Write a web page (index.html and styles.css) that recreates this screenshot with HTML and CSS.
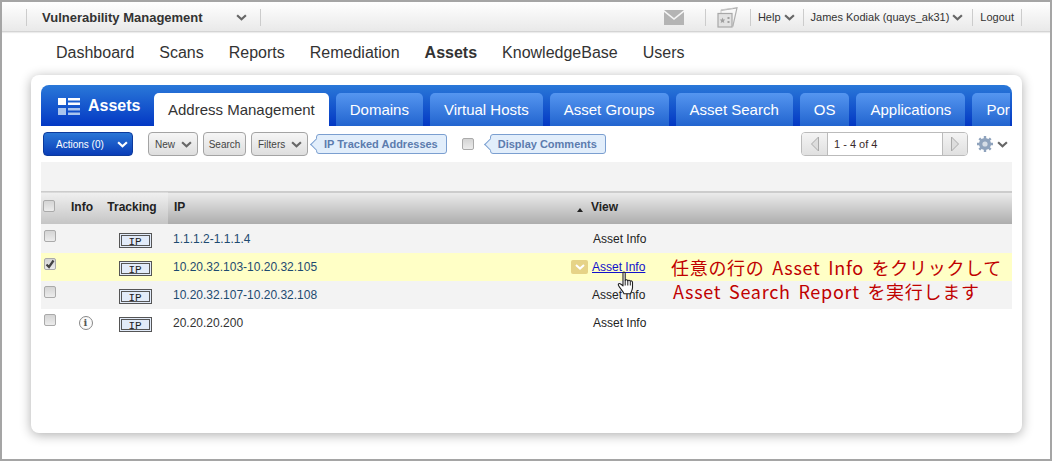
FILE: index.html
```html
<!DOCTYPE html>
<html lang="en">
<head>
  <meta charset="UTF-8" />
  <title>Vulnerability Management - Assets</title>
  <link rel="stylesheet" href="styles.css">
</head>
<body>
<div class="frame">

  <!-- Module switcher and account links -->
  <header class="topbar">
    <div class="module">
      <span>Vulnerability Management</span>
      <svg class="chev chev-lg" viewBox="0 0 10 6"><path d="M1 1l4 3.6L9 1"/></svg>
    </div>
    <div class="account">
      <svg class="mail" viewBox="0 0 20 15"><path d="M0 0h20L10 8z"/><path d="M0 2l10 8 10-8v13H0z"/></svg>
      <span class="acc-item acc-icon">
        <svg class="cards" viewBox="0 0 21 21">
          <path d="M4 3.500L20 .8 15.800 19.500" fill="none" stroke="#b0b0b0" stroke-width="1.200"/>
          <path d="M4 6V2.800l12-1.500" fill="none" stroke="#c8c8c8"/>
          <rect x="1" y="6.500" width="14" height="13.500" fill="#e2e2e2" stroke="#a8a8a8" stroke-width="1.200"/>
          <path d="M5.500 10.500l.8 1.900 2 .2-1.500 1.300.5 2-1.800-1-1.800 1 .5-2-1.500-1.300 2-.2z" fill="#a0a0a0"/>
          <rect x="10.500" y="10" width="2" height="2" fill="#a0a0a0"/>
          <rect x="10.500" y="14" width="2" height="2" fill="#a0a0a0"/>
        </svg>
      </span>
      <span class="acc-item acc-help">Help <svg class="chev chev-lg" viewBox="0 0 10 6"><path d="M1 1l4 3.6L9 1"/></svg></span>
      <span class="acc-item acc-user">James Kodiak (quays_ak31) <svg class="chev chev-lg" viewBox="0 0 10 6"><path d="M1 1l4 3.6L9 1"/></svg></span>
      <span class="acc-item acc-last">Logout</span>
    </div>
  </header>

  <nav class="mainnav">
    <a href="#">Dashboard</a>
    <a href="#">Scans</a>
    <a href="#">Reports</a>
    <a href="#">Remediation</a>
    <a href="#" class="current">Assets</a>
    <a href="#">KnowledgeBase</a>
    <a href="#">Users</a>
  </nav>

  <main class="card">
    <div class="tabbar">
      <div class="brand">
        <svg class="brand-icon" viewBox="0 0 22 17">
          <rect x="0" y="0" width="8" height="7" fill="#fff"/>
          <rect x="10" y="0" width="12" height="2.5" fill="#fff"/>
          <rect x="10" y="4.5" width="12" height="2.5" fill="#fff"/>
          <rect x="0" y="10" width="8" height="7" fill="#a9c4ee"/>
          <rect x="10" y="10" width="12" height="2.5" fill="#a9c4ee"/>
          <rect x="10" y="14.5" width="12" height="2.5" fill="#a9c4ee"/>
        </svg>
        <span>Assets</span>
      </div>
      <div class="tabs">
        <a href="#" class="tab active">Address Management</a>
        <a href="#" class="tab">Domains</a>
        <a href="#" class="tab">Virtual Hosts</a>
        <a href="#" class="tab">Asset Groups</a>
        <a href="#" class="tab">Asset Search</a>
        <a href="#" class="tab">OS</a>
        <a href="#" class="tab">Applications</a>
        <a href="#" class="tab">Ports</a>
      </div>
    </div>

    <div class="toolbar">
      <button class="btn btn-primary">Actions (0) <svg class="chev chev-lg chev-white" viewBox="0 0 10 6"><path d="M1 1l4 3.6L9 1"/></svg></button>
      <button class="btn btn-new">New <svg class="chev chev-lg" viewBox="0 0 10 6"><path d="M1 1l4 3.6L9 1"/></svg></button>
      <button class="btn btn-search">Search</button>
      <button class="btn btn-filters">Filters <svg class="chev chev-lg" viewBox="0 0 10 6"><path d="M1 1l4 3.6L9 1"/></svg></button>
      <span class="callout callout-ip">IP Tracked Addresses</span>
      <span class="check check-comments"></span>
      <span class="callout callout-comments">Display Comments</span>
      <div class="pager">
        <span class="pager-btn"><svg viewBox="0 0 10 16"><path d="M8.5 1v14L1.5 8z"/></svg></span>
        <span class="pager-text">1 - 4 of 4</span>
        <span class="pager-btn pager-next"><svg viewBox="0 0 10 16"><path d="M1.5 1v14l7-7z"/></svg></span>
      </div>
      <svg class="gear" viewBox="0 0 16 16">
        <circle cx="8" cy="8" r="4.6" fill="none" stroke="#8fa3bd" stroke-width="3"/>
        <path d="M8 0v16M0 8h16M2.3 2.3l11.4 11.4M13.7 2.3L2.3 13.7" stroke="#8fa3bd" stroke-width="2.4"/>
        <circle cx="8" cy="8" r="2.6" fill="#d6dde6"/>
      </svg>
      <svg class="chev chev-lg" viewBox="0 0 10 6"><path d="M1 1l4 3.6L9 1"/></svg>
    </div>

    <div class="band"></div>

    <table class="grid">
      <colgroup>
        <col class="col-check"><col class="col-info"><col class="col-track"><col class="col-ip"><col>
      </colgroup>
      <thead>
        <tr>
          <th><span class="check"></span></th>
          <th class="center th-info">Info</th>
          <th class="center th-track">Tracking</th>
          <th class="th-dark">IP <span class="sort"></span></th>
          <th class="th-dark th-view">View</th>
        </tr>
      </thead>
      <tbody>
        <tr class="odd">
          <td><span class="check"></span></td>
          <td></td>
          <td class="center td-badge"><span class="badge">IP</span></td>
          <td class="ip">1.1.1.2-1.1.1.4</td>
          <td class="view">Asset Info</td>
        </tr>
        <tr class="selected">
          <td><span class="check"><svg viewBox="0 0 12 12"><path d="M2.5 6.5l2.5 2.5 4.5-6.5" fill="none" stroke="#444" stroke-width="2.2"/></svg></span></td>
          <td></td>
          <td class="center td-badge"><span class="badge">IP</span></td>
          <td class="ip ip-menu">10.20.32.103-10.20.32.105<span class="rowmenu"><svg class="chev chev-white" viewBox="0 0 10 6"><path d="M1 1l4 3.6L9 1"/></svg></span></td>
          <td class="view view-link"><a href="#">Asset Info</a></td>
        </tr>
        <tr class="odd">
          <td><span class="check"></span></td>
          <td></td>
          <td class="center td-badge"><span class="badge">IP</span></td>
          <td class="ip">10.20.32.107-10.20.32.108</td>
          <td class="view view-link">Asset Info</td>
        </tr>
        <tr>
          <td><span class="check"></span></td>
          <td class="center td-dot"><span class="info-dot">i</span></td>
          <td class="center td-badge"><span class="badge">IP</span></td>
          <td class="ip ip-plain">20.20.20.200</td>
          <td class="view">Asset Info</td>
        </tr>
      </tbody>
    </table>

    <!-- Pointer and note sit on top of the rows -->
    <svg class="hand" viewBox="0 0 18 24">
      <path d="M6 1.500c1-.8 2.200-.2 2.200 1v7c.4-1 2.400-1 2.600.3.500-.9 2.300-.8 2.500.5.600-.7 2.200-.4 2.200 1v5.500c0 2.500-1.500 4-2 6H7c-.6-2-2.300-3.500-4-6-.9-1.300-2.300-3-1.500-4 .7-.8 2-.3 4.500 2V2.500z" fill="#fff" stroke="#222" stroke-width="1.100" stroke-linejoin="round"/>
      <path d="M8.200 9.500v5M10.800 10v4.500M13.300 10.500v4" fill="none" stroke="#222"/>
    </svg>
    <p class="note">任意の行の Asset Info をクリックして<span class="note-line">Asset Search Report を実行します</span></p>
  </main>

</div>
</body>
</html>
```

FILE: styles.css
```css
* { box-sizing: border-box; }
html, body { margin: 0; height: 100%; }
body { font-family: "Liberation Sans", Arial, sans-serif; background: #fff; color: #333; overflow: hidden; }
svg { display: block; }
a { color: inherit; text-decoration: none; }

.frame { height: 461px; border: 2px solid #a5a5a5; background: #fff; overflow: hidden; }

.chev { width: 10px; height: 6px; fill: none; stroke: #666; stroke-width: 2; flex: none; }
.chev-lg { width: 11px; height: 7px; }
.chev-white { stroke: #fff; }

/* top bar */
.topbar { display: flex; align-items: center; justify-content: space-between; height: 30px; padding: 6px 28px 5px 24px; background: linear-gradient(#fff, #e9e9e9); border-bottom: 1px solid #d4d4d4; box-shadow: 0 1px 1px #ececec; }
.module { display: flex; align-items: center; justify-content: space-between; width: 235px; height: 17px; padding: 0 13px 0 15px; border-left: 1px solid #ccc; border-right: 1px solid #ccc; font-size: 13px; font-weight: bold; color: #333; }
.account { display: flex; align-items: center; height: 17px; font-size: 11px; color: #333; }
.mail { width: 20px; height: 15px; fill: #b4b4b4; margin-right: 21px; }
.acc-item { display: flex; align-items: center; gap: 3px; height: 17px; padding: 0 7px; border-left: 1px solid #ccc; white-space: nowrap; }
.acc-icon { width: 45px; padding: 0 0 0 11px; }
.acc-help { padding-right: 8px; }
.acc-user { padding-right: 9px; }
.cards { width: 21px; height: 21px; flex: none; }
.acc-last { border-right: 1px solid #ccc; }

/* main navigation */
.mainnav { display: flex; gap: 25px; height: 43px; padding: 12px 0 0 54px; font-size: 16px; line-height: 18px; color: #333; }
.mainnav .current { font-weight: bold; }

/* white card */
.card { position: relative; margin: 0 28px 0 29px; height: 358px; padding: 10px 10px 0; background: #fff; border-radius: 8px; box-shadow: 0 2px 12px rgba(0,0,0,0.32); }

.tabbar { display: flex; align-items: flex-end; height: 41px; border-radius: 8px 8px 0 0; background: linear-gradient(#2a78d8, #0338c4); overflow: hidden; }
.brand { display: flex; align-items: center; gap: 8px; flex: none; width: 113px; height: 41px; padding: 1px 0 0 17px; font-size: 16px; font-weight: bold; color: #fff; }
.brand-icon { width: 22px; height: 17px; }
.tabs { display: flex; gap: 7px; width: 856px; overflow: hidden; }
.tab { flex: none; height: 33px; padding: 0 14px; font-size: 15px; line-height: 34px; color: #fff; border-radius: 5px 5px 0 0; background: linear-gradient(#5596f0, #2264cf); }
.tab.active { color: #333; background: #fff; }

/* toolbar */
.toolbar { display: flex; align-items: center; height: 36px; padding-left: 2px; }
.btn { display: flex; align-items: center; justify-content: space-between; flex: none; height: 24px; margin-right: 5px; padding: 0 5px 0 6px; font: 10px "Liberation Sans", Arial, sans-serif; color: #444; background: linear-gradient(#f6f6f6, #dedede); border: 1px solid #a4a4a4; border-radius: 4px; }
.btn-primary { width: 90px; margin-right: 15px; padding: 0 4px 0 12px; color: #fff; background: linear-gradient(#2b76d6, #0a3db8); border-color: #0c3a9c; }
.btn-new { width: 50px; }
.btn-search { width: 43px; justify-content: center; padding: 0; }
.btn-filters { width: 57px; margin-right: 0; }
.callout { position: relative; flex: none; height: 20px; padding: 0 8px 0 7px; font-size: 11px; font-weight: bold; line-height: 18px; color: #5c7cae; background: #e2eefb; border: 1px solid #7b9fd0; border-radius: 3px; white-space: nowrap; }
.callout::before { content: ""; position: absolute; left: -5px; top: 5px; width: 8px; height: 8px; background: #e2eefb; border-left: 1px solid #7b9fd0; border-bottom: 1px solid #7b9fd0; transform: rotate(45deg); }
.callout-ip { margin-left: 8px; }
.callout-comments { margin-left: 16px; }
.check { display: block; width: 12px; height: 12px; background: linear-gradient(#d4d4d4, #ececec); border: 1px solid #aaa; border-radius: 2px; }
.check svg { width: 12px; height: 12px; margin: -1px; }
.check-comments { margin-left: 15px; }

.pager { display: flex; width: 167px; height: 24px; margin-left: auto; background: #fff; border: 1px solid #bbb; border-radius: 4px; overflow: hidden; }
.pager-btn { display: flex; align-items: center; justify-content: center; width: 26px; background: linear-gradient(#f4f4f4, #e0e0e0); border-right: 1px solid #bbb; }
.pager-next { width: 25px; border-right: 0; border-left: 1px solid #bbb; }
.pager-btn svg { width: 10px; height: 16px; fill: #ddd; stroke: #aaa; }
.pager-text { flex: 1; padding-left: 6px; font-size: 11px; line-height: 22px; color: #3a2a2a; }
.gear { width: 16px; height: 16px; margin: 0 4px 0 9px; }
.toolbar > .chev-lg { margin-right: 4px; }

.band { height: 29px; background: #f3f3f3; }

/* address table */
.grid { width: 100%; border-collapse: collapse; table-layout: fixed; font-size: 12px; }
.col-check { width: 25px; }
.col-info { width: 34px; }
.col-track { width: 68px; }
.col-ip { width: 420px; }
.grid th { position: relative; height: 32px; padding: 0 0 1px; text-align: left; font-size: 12px; color: #222; background: linear-gradient(#f0f0f0, #c4c4c4); border-top: 1px solid #ccc; }
.grid th .check { margin: -3px 0 0 2px; }
.grid th.center, .grid td.center { text-align: center; }
.grid .th-info { padding-right: 2px; }
.grid .th-track { padding-right: 4px; }
.grid .th-dark { padding-left: 6px; background: linear-gradient(#ececec, #acacac); }
.grid .th-view { padding-left: 3px; }
.sort { position: absolute; right: 5px; top: 16px; border: 3px solid transparent; border-top: 0; border-bottom: 4px solid #222; }
.grid td { height: 28px; padding: 0; vertical-align: middle; }
.grid td:first-child { vertical-align: top; padding: 5px 0 0 3px; }
.grid tbody tr:first-child td { height: 29px; padding-top: 2px; }
.grid tbody tr:first-child td:first-child { padding-top: 6px; }
.grid .td-badge { padding-left: 2px; }
.grid .td-dot { padding-left: 5px; }
.odd { background: #f3f3f3; }
.selected { background: #ffffc6; }
.ip { position: relative; padding-left: 5px !important; color: #1d4a70; }
.ip-plain { color: #333; }
.view { padding-left: 5px !important; color: #222; }
.view-link { padding-left: 4px !important; }
.view-link a { color: #1111cc; text-decoration: underline; }
.rowmenu { position: absolute; right: 0; top: 7px; display: flex; align-items: center; justify-content: center; width: 17px; height: 14px; background: #e6d387; border-radius: 2px; }
.badge { display: inline-block; width: 33px; height: 15px; margin-top: 3px; font: 11px/12px "Liberation Mono", monospace; text-align: center; color: #222; background: #e2ebf9; border: 3px double #555; }
.info-dot { display: inline-block; width: 14px; height: 14px; font: bold 10px/12px "DejaVu Serif", serif; text-align: center; color: #555; background: #fafafa; border: 1px solid #888; border-radius: 50%; }

.hand { position: absolute; left: 586px; top: 196px; width: 18px; height: 24px; }
.note { position: absolute; left: 640px; top: 180px; margin: 0; font: 18px/24px "Noto Sans CJK JP", sans-serif; letter-spacing: 0.7px; word-spacing: 3px; color: #c00000; white-space: nowrap; }
.note-line { display: block; margin-left: 2px; }
```
